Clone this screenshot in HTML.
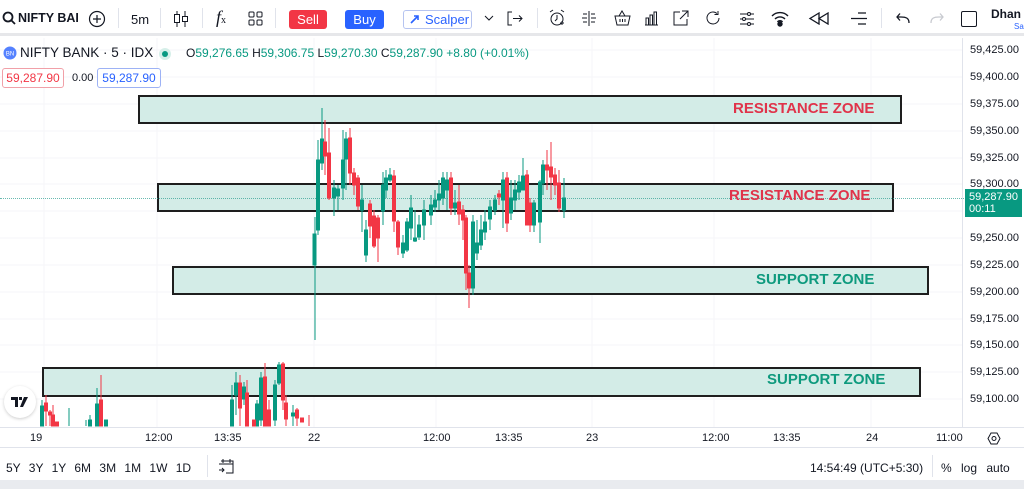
<!DOCTYPE html>
<html><head><meta charset="utf-8"><style>
*{margin:0;padding:0;box-sizing:border-box}
body{width:1024px;height:489px;overflow:hidden;background:#fff;font-family:"Liberation Sans",sans-serif;position:relative;color:#131722}
.a{position:absolute;white-space:nowrap}
.tb{font-size:13px}
.pl{position:absolute;left:970px;font-size:11px;color:#131722}
.tl{position:absolute;top:432px;font-size:11px;color:#131722}
.zone{position:absolute;background:#d3ece7;border:2px solid #1e1e1e}
.zt{position:absolute;font-size:15px;font-weight:bold;letter-spacing:0}
</style></head><body>
<div class="a" style="left:0;top:0;width:1024px;height:36px;background:#fff;border-bottom:3px solid #e6e7ea"></div>
<svg class="a" style="left:2px;top:11px" width="14" height="14"><circle cx="6" cy="6" r="4.5" fill="none" stroke="#131722" stroke-width="1.8"/><line x1="9.5" y1="9.5" x2="13" y2="13" stroke="#131722" stroke-width="1.8"/></svg>
<div class="a tb" style="left:18px;top:11px;font-weight:bold;font-size:12.5px">NIFTY BAI</div>
<svg class="a" style="left:88px;top:10px" width="18" height="18"><circle cx="9" cy="9" r="7.5" fill="none" stroke="#131722" stroke-width="1.2"/><path d="M9 5v8M5 9h8" stroke="#131722" stroke-width="1.2"/></svg>
<div class="a" style="left:118px;top:8px;width:1px;height:20px;background:#e0e3eb"></div>
<div class="a tb" style="left:131px;top:12px">5m</div>
<div class="a" style="left:160px;top:8px;width:1px;height:20px;background:#e0e3eb"></div>
<svg class="a" style="left:173px;top:10px" width="16" height="18"><path d="M4 1v16M12 1v16" stroke="#131722"/><rect x="1.5" y="4.5" width="5" height="8" fill="#fff" stroke="#131722"/><rect x="9.5" y="6.5" width="5" height="5" fill="#fff" stroke="#131722"/></svg>
<div class="a" style="left:202px;top:8px;width:1px;height:20px;background:#e0e3eb"></div>
<div class="a" style="left:216px;top:7px;font-family:'Liberation Serif',serif;font-style:italic;font-size:18px">f<span style="font-size:10px;font-style:normal">x</span></div>
<svg class="a" style="left:248px;top:11px" width="15" height="15" fill="none" stroke="#131722"><rect x="1" y="1" width="5" height="5" rx="1"/><rect x="9" y="1" width="5" height="5" rx="1"/><rect x="1" y="9" width="5" height="5" rx="1"/><rect x="9" y="9" width="5" height="5" rx="1"/></svg>
<div class="a" style="left:275px;top:8px;width:1px;height:20px;background:#e0e3eb"></div>
<div class="a" style="left:289px;top:10px;width:38px;height:19px;background:#f23645;border-radius:3px;color:#fff;font-size:13px;text-align:center;line-height:19px">Sell</div>
<div class="a" style="left:345px;top:10px;width:39px;height:19px;background:#2962ff;border-radius:3px;color:#fff;font-size:13px;text-align:center;line-height:19px">Buy</div>
<div class="a" style="left:403px;top:10px;width:69px;height:19px;border:1px solid #b6c4f0;border-radius:3px;color:#2962ff;font-size:13px;line-height:17px;padding-left:21px">Scalper</div>
<svg class="a" style="left:410px;top:14px" width="10" height="10"><path d="M1 9L8 2M4 2h4v4" stroke="#2962ff" stroke-width="1.6" fill="none"/></svg>
<svg class="a" style="left:484px;top:14px" width="10" height="8"><path d="M1 2l4 4 4-4" stroke="#131722" fill="none"/></svg>
<svg class="a" style="left:507px;top:11px" width="16" height="15" fill="none" stroke="#131722"><path d="M5 1H1v13h4M6 7.5h9M12 4.5l3 3-3 3"/></svg>
<div class="a" style="left:537px;top:8px;width:1px;height:20px;background:#e0e3eb"></div>
<svg class="a" style="left:548px;top:9px" width="18" height="18" fill="none" stroke="#131722"><circle cx="9" cy="10" r="6"/><path d="M2 3l3-2M16 3l-3-2M9 6v4l-2 2M12 14h4M14 12v4"/></svg>
<svg class="a" style="left:581px;top:11px" width="16" height="15" stroke="#131722"><path d="M8 0v15M2 3h4M10 3h4M1 7h5M10 7h5M2 11h4M10 11h4"/></svg>
<svg class="a" style="left:614px;top:10px" width="17" height="16" fill="none" stroke="#131722"><path d="M1 6h15l-2 9H3zM5 6l3-5 3 5M6 9v3M8.5 9v3M11 9v3"/></svg>
<svg class="a" style="left:644px;top:11px" width="15" height="15" fill="none" stroke="#131722"><path d="M1 14h13"/><rect x="2" y="7" width="2.5" height="7"/><rect x="6" y="4" width="2.5" height="10"/><rect x="10" y="1" width="2.5" height="13"/></svg>
<svg class="a" style="left:673px;top:10px" width="16" height="16" fill="none" stroke="#131722"><path d="M7 2H1v13h13V9M9 1h6v6M15 1L7 9"/></svg>
<svg class="a" style="left:705px;top:10px" width="16" height="16" fill="none" stroke="#131722"><path d="M14 8a6 6 0 1 1-2-4.5M13 1v3.5H9.5"/></svg>
<svg class="a" style="left:739px;top:11px" width="16" height="15" fill="none" stroke="#131722"><path d="M1 3h14M1 8h14M1 13h14"/><circle cx="10" cy="3" r="1.5" fill="#fff"/><circle cx="5" cy="8" r="1.5" fill="#fff"/><circle cx="10" cy="13" r="1.5" fill="#fff"/></svg>
<svg class="a" style="left:771px;top:10px" width="18" height="17" fill="none" stroke="#131722" stroke-width="1.4"><path d="M1 6a11 11 0 0 1 16 0M4 9a7 7 0 0 1 10 0M6.5 12a3 3 0 0 1 5 0"/><circle cx="9" cy="14" r="2" fill="#131722"/></svg>
<svg class="a" style="left:808px;top:12px" width="22" height="13" fill="none" stroke="#131722" stroke-width="1.3"><path d="M11 1L2 6.5 11 12zM20 1l-9 5.5 9 5.5z"/></svg>
<svg class="a" style="left:850px;top:11px" width="18" height="15" stroke="#131722" stroke-width="1.3"><path d="M8 2h8M1 7.5h16M8 13h8"/></svg>
<div class="a" style="left:881px;top:8px;width:1px;height:20px;background:#e0e3eb"></div>
<svg class="a" style="left:896px;top:12px" width="14" height="12" fill="none" stroke="#131722" stroke-width="1.3"><path d="M13 11c0-5-3-6-8-6H1M4 1.5L1 5l3 3.5"/></svg>
<svg class="a" style="left:930px;top:12px" width="14" height="12" fill="none" stroke="#c8cad0" stroke-width="1.3"><path d="M1 11c0-5 3-6 8-6h4M10 1.5L13 5l-3 3.5"/></svg>
<div class="a" style="left:961px;top:11px;width:16px;height:16px;border:1.4px solid #131722;border-radius:2px"></div>
<div class="a" style="left:991px;top:7px;font-size:12px;font-weight:bold">Dhan I</div>
<div class="a" style="left:1014px;top:22px;font-size:8px;color:#2962ff">Sa</div>

<svg class="a" style="left:0;top:38px" width="962" height="389">
<g stroke="#f5f6f8" stroke-width="1">
<line x1="0" y1="12" x2="962" y2="12"/><line x1="0" y1="39" x2="962" y2="39"/><line x1="0" y1="66" x2="962" y2="66"/><line x1="0" y1="93" x2="962" y2="93"/><line x1="0" y1="120" x2="962" y2="120"/><line x1="0" y1="146" x2="962" y2="146"/><line x1="0" y1="173" x2="962" y2="173"/><line x1="0" y1="200" x2="962" y2="200"/><line x1="0" y1="227" x2="962" y2="227"/><line x1="0" y1="254" x2="962" y2="254"/><line x1="0" y1="281" x2="962" y2="281"/><line x1="0" y1="307" x2="962" y2="307"/><line x1="0" y1="334" x2="962" y2="334"/><line x1="0" y1="361" x2="962" y2="361"/>
<line x1="44" y1="0" x2="44" y2="389"/><line x1="157" y1="0" x2="157" y2="389"/><line x1="314" y1="0" x2="314" y2="389"/><line x1="436" y1="0" x2="436" y2="389"/><line x1="592" y1="0" x2="592" y2="389"/><line x1="714" y1="0" x2="714" y2="389"/><line x1="871" y1="0" x2="871" y2="389"/>
</g>
</svg>
<div class="zone" style="left:138px;top:95px;width:764px;height:29px"></div>
<div class="zone" style="left:157px;top:183px;width:737px;height:29px"></div>
<div class="zone" style="left:172px;top:266px;width:757px;height:29px"></div>
<div class="zone" style="left:42px;top:367px;width:879px;height:30px"></div>
<div class="a" style="left:0;top:198px;width:964px;border-top:1px dotted #2a9d8f;opacity:.7"></div>
<svg class="a" style="left:0;top:0" width="962" height="427">
<g fill="#089981" stroke="#089981">
<line x1="315" y1="217" x2="315" y2="340"/><rect x="313" y="234" width="3" height="31"/>
<line x1="318" y1="140" x2="318" y2="235"/><rect x="316.5" y="160" width="3" height="70"/>
<line x1="322" y1="108" x2="322" y2="170"/><rect x="320.5" y="139" width="3" height="24"/>
<line x1="343" y1="130" x2="343" y2="200"/><rect x="341.5" y="160" width="3" height="28"/>
<line x1="346" y1="132" x2="346" y2="190"/><rect x="344.5" y="139" width="3" height="20"/>
<line x1="334" y1="180" x2="334" y2="216"/><rect x="332.5" y="188" width="3" height="10"/>
<line x1="338" y1="185" x2="338" y2="210"/><rect x="336.5" y="189" width="3" height="7"/>
<line x1="362" y1="185" x2="362" y2="232"/><rect x="360.5" y="200" width="3" height="10"/>
<line x1="366" y1="220" x2="366" y2="262"/><rect x="364.5" y="230" width="3" height="25"/>
<line x1="383" y1="172" x2="383" y2="225"/><rect x="381.5" y="185" width="3" height="26"/>
<line x1="386" y1="170" x2="386" y2="198"/><rect x="384.5" y="178" width="3" height="12"/>
<line x1="390" y1="168" x2="390" y2="182"/><rect x="388.5" y="175" width="3" height="5"/>
<line x1="403" y1="235" x2="403" y2="258"/><rect x="401.5" y="243" width="3" height="10"/>
<line x1="407" y1="218" x2="407" y2="252"/><rect x="405.5" y="222" width="3" height="28"/>
<line x1="411" y1="195" x2="411" y2="240"/><rect x="409.5" y="208" width="3" height="20"/>
<line x1="415" y1="210" x2="415" y2="242"/><rect x="413.5" y="238" width="3" height="3"/>
<line x1="419" y1="215" x2="419" y2="240"/><rect x="417.5" y="225" width="3" height="12"/>
<line x1="424" y1="200" x2="424" y2="240"/><rect x="422.5" y="210" width="3" height="15"/>
<line x1="431" y1="195" x2="431" y2="225"/><rect x="429.5" y="205" width="3" height="10"/>
<line x1="435" y1="190" x2="435" y2="212"/><rect x="433.5" y="200" width="3" height="7"/>
<line x1="439" y1="180" x2="439" y2="210"/><rect x="437.5" y="194" width="3" height="6"/>
<line x1="443" y1="172" x2="443" y2="205"/><rect x="441.5" y="178" width="3" height="20"/>
<line x1="447" y1="172" x2="447" y2="210"/><rect x="445.5" y="180" width="3" height="10"/>
<line x1="455" y1="190" x2="455" y2="215"/><rect x="453.5" y="203" width="3" height="5"/>
<line x1="473" y1="215" x2="473" y2="295"/><rect x="471.5" y="222" width="3" height="66"/>
<line x1="477" y1="220" x2="477" y2="260"/><rect x="475.5" y="243" width="3" height="10"/>
<line x1="481" y1="215" x2="481" y2="250"/><rect x="479.5" y="230" width="3" height="15"/>
<line x1="485" y1="210" x2="485" y2="240"/><rect x="483.5" y="222" width="3" height="10"/>
<line x1="490" y1="200" x2="490" y2="230"/><rect x="488.5" y="207" width="3" height="12"/>
<line x1="495" y1="195" x2="495" y2="215"/><rect x="493.5" y="200" width="3" height="10"/>
<line x1="503" y1="172" x2="503" y2="228"/><rect x="501.5" y="180" width="3" height="20"/>
<line x1="511" y1="180" x2="511" y2="220"/><rect x="509.5" y="198" width="3" height="15"/>
<line x1="515" y1="180" x2="515" y2="210"/><rect x="513.5" y="190" width="3" height="10"/>
<line x1="519" y1="175" x2="519" y2="200"/><rect x="517.5" y="182" width="3" height="10"/>
<line x1="523" y1="158" x2="523" y2="190"/><rect x="521.5" y="176" width="3" height="14"/>
<line x1="534" y1="200" x2="534" y2="232"/><rect x="532.5" y="203" width="3" height="22"/>
<line x1="540" y1="180" x2="540" y2="243"/><rect x="538.5" y="182" width="3" height="40"/>
<line x1="543" y1="160" x2="543" y2="195"/><rect x="541.5" y="165" width="3" height="18"/>
<line x1="564" y1="178" x2="564" y2="218"/><rect x="562.5" y="198" width="3" height="12"/>
<line x1="42" y1="400" x2="42" y2="426"/><rect x="40.5" y="406" width="3" height="20"/>
<line x1="69" y1="408" x2="69" y2="426"/>
<line x1="97" y1="388" x2="97" y2="426"/><rect x="95.5" y="404" width="3" height="22"/>
<line x1="90" y1="415" x2="90" y2="426"/><rect x="88.5" y="420" width="3" height="6"/>
<line x1="86" y1="420" x2="86" y2="426"/>
<rect x="104.5" y="420" width="3" height="6"/>
<line x1="232" y1="385" x2="232" y2="426"/><rect x="230.5" y="400" width="3" height="26"/>
<line x1="236" y1="372" x2="236" y2="415"/><rect x="234.5" y="383" width="3" height="12"/>
<line x1="244" y1="382" x2="244" y2="405"/><rect x="242.5" y="387" width="3" height="12"/>
<line x1="257" y1="400" x2="257" y2="426"/><rect x="255.5" y="404" width="3" height="22"/>
<line x1="261" y1="372" x2="261" y2="426"/><rect x="259.5" y="378" width="3" height="42"/>
<line x1="275" y1="380" x2="275" y2="426"/><rect x="273.5" y="385" width="3" height="35"/>
<line x1="279" y1="362" x2="279" y2="385"/><rect x="277.5" y="365" width="3" height="18"/>
<line x1="293" y1="405" x2="293" y2="426"/><rect x="291.5" y="413" width="3" height="3"/>
</g>
<g fill="#f23645" stroke="#f23645">
<line x1="325" y1="120" x2="325" y2="175"/><rect x="323.5" y="142" width="3" height="14"/>
<line x1="329" y1="128" x2="329" y2="200"/><rect x="327.5" y="153" width="3" height="45"/>
<line x1="350" y1="128" x2="350" y2="185"/><rect x="348.5" y="138" width="3" height="35"/>
<line x1="354" y1="168" x2="354" y2="195"/><rect x="352.5" y="173" width="3" height="12"/>
<line x1="358" y1="175" x2="358" y2="210"/><rect x="356.5" y="178" width="3" height="28"/>
<line x1="370" y1="200" x2="370" y2="238"/><rect x="368.5" y="204" width="3" height="22"/>
<line x1="374" y1="210" x2="374" y2="248"/><rect x="372.5" y="216" width="3" height="30"/>
<line x1="378" y1="215" x2="378" y2="262"/><rect x="376.5" y="218" width="3" height="20"/>
<line x1="394" y1="170" x2="394" y2="232"/><rect x="392.5" y="176" width="3" height="45"/>
<line x1="398" y1="220" x2="398" y2="255"/><rect x="396.5" y="222" width="3" height="25"/>
<line x1="451" y1="172" x2="451" y2="215"/><rect x="449.5" y="178" width="3" height="30"/>
<line x1="459" y1="185" x2="459" y2="225"/><rect x="457.5" y="202" width="3" height="12"/>
<line x1="463" y1="205" x2="463" y2="240"/><rect x="461.5" y="210" width="3" height="10"/>
<line x1="466" y1="215" x2="466" y2="290"/><rect x="464.5" y="218" width="3" height="55"/>
<line x1="469" y1="265" x2="469" y2="308"/><rect x="467.5" y="273" width="3" height="15"/>
<line x1="499" y1="190" x2="499" y2="205"/><rect x="497.5" y="194" width="3" height="3"/>
<line x1="507" y1="172" x2="507" y2="232"/><rect x="505.5" y="178" width="3" height="45"/>
<line x1="527" y1="170" x2="527" y2="225"/><rect x="525.5" y="175" width="3" height="50"/>
<line x1="530" y1="198" x2="530" y2="232"/><rect x="528.5" y="203" width="3" height="22"/>
<line x1="547" y1="150" x2="547" y2="190"/><rect x="545.5" y="165" width="3" height="5"/>
<line x1="551" y1="142" x2="551" y2="200"/><rect x="549.5" y="167" width="3" height="10"/>
<line x1="555" y1="168" x2="555" y2="195"/><rect x="553.5" y="175" width="3" height="10"/>
<line x1="559" y1="170" x2="559" y2="212"/><rect x="557.5" y="183" width="3" height="25"/>
<line x1="46" y1="395" x2="46" y2="426"/><rect x="44.5" y="403" width="3" height="8"/>
<line x1="50" y1="410" x2="50" y2="426"/><rect x="48.5" y="412" width="3" height="3"/>
<line x1="53" y1="405" x2="53" y2="426"/><rect x="51.5" y="415" width="3" height="11"/>
<rect x="55.5" y="422" width="3" height="4"/>
<line x1="101" y1="375" x2="101" y2="426"/><rect x="99.5" y="400" width="3" height="26"/>
<line x1="240" y1="375" x2="240" y2="426"/><rect x="238.5" y="383" width="3" height="25"/>
<line x1="247" y1="380" x2="247" y2="426"/><rect x="245.5" y="393" width="3" height="33"/>
<rect x="252.5" y="420" width="3" height="6"/>
<line x1="265" y1="363" x2="265" y2="426"/><rect x="263.5" y="377" width="3" height="49"/>
<line x1="269" y1="400" x2="269" y2="426"/><rect x="267.5" y="410" width="3" height="16"/>
<line x1="283" y1="362" x2="283" y2="410"/><rect x="281.5" y="364" width="3" height="36"/>
<line x1="286" y1="395" x2="286" y2="426"/><rect x="284.5" y="403" width="3" height="16"/>
<line x1="297" y1="408" x2="297" y2="426"/><rect x="295.5" y="410" width="3" height="8"/>
<rect x="300.5" y="418" width="3" height="4"/>
<line x1="309" y1="415" x2="309" y2="426"/>
</g>
</svg>
<div class="zt" style="left:733px;top:100px;color:#e0334a">RESISTANCE ZONE</div>
<div class="zt" style="left:729px;top:187px;color:#e0334a">RESISTANCE ZONE</div>
<div class="zt" style="left:756px;top:271px;color:#0e9a7e">SUPPORT ZONE</div>
<div class="zt" style="left:767px;top:371px;color:#0e9a7e">SUPPORT ZONE</div>

<svg class="a" style="left:3px;top:46px" width="14" height="14"><circle cx="7" cy="7" r="6.5" fill="#2962ff" opacity=".8"/><text x="7" y="9.5" font-size="6" fill="#fff" text-anchor="middle" font-family="Liberation Sans">BN</text></svg>
<div class="a" style="left:20px;top:45px;font-size:13.5px">NIFTY BANK · 5 · IDX</div>
<div class="a" style="left:159px;top:48px;width:12px;height:12px;border-radius:50%;background:#d6efe9"></div>
<div class="a" style="left:162px;top:51px;width:6px;height:6px;border-radius:50%;background:#089981"></div>
<div class="a" style="left:186px;top:46px;font-size:12px;color:#089981"><span style="color:#131722">O</span>59,276.65 <span style="color:#131722">H</span>59,306.75 <span style="color:#131722">L</span>59,270.30 <span style="color:#131722">C</span>59,287.90 +8.80 (+0.01%)</div>
<div class="a" style="left:2px;top:68px;width:62px;height:20px;border:1px solid #f1a0a8;border-radius:3px;color:#f23645;font-size:12px;line-height:18px;text-align:center;background:#fff">59,287.90</div>
<div class="a" style="left:72px;top:72px;font-size:11px">0.00</div>
<div class="a" style="left:97px;top:68px;width:64px;height:20px;border:1px solid #9db2f5;border-radius:3px;color:#2962ff;font-size:12px;line-height:18px;text-align:center;background:#fff">59,287.90</div>
<div class="a" style="left:4px;top:386px;width:32px;height:32px;border-radius:50%;background:#fff;box-shadow:0 1px 3px rgba(0,0,0,.2)"></div>
<svg class="a" style="left:10px;top:396px" width="20" height="12"><path d="M1 1h7v10H5V4H1zM9 1h3v3H9zM14 1h4l-5 10h-3z" fill="#131722"/></svg>

<div class="a" style="left:962px;top:38px;width:1px;height:389px;background:#e0e3eb"></div>
<div class="pl" style="top:44px">59,425.00</div>
<div class="pl" style="top:71px">59,400.00</div>
<div class="pl" style="top:98px">59,375.00</div>
<div class="pl" style="top:125px">59,350.00</div>
<div class="pl" style="top:152px">59,325.00</div>
<div class="pl" style="top:178px">59,300.00</div>
<div class="pl" style="top:232px">59,250.00</div>
<div class="pl" style="top:259px">59,225.00</div>
<div class="pl" style="top:286px">59,200.00</div>
<div class="pl" style="top:313px">59,175.00</div>
<div class="pl" style="top:339px">59,150.00</div>
<div class="pl" style="top:366px">59,125.00</div>
<div class="pl" style="top:393px">59,100.00</div>
<div class="a" style="left:965px;top:189px;width:57px;height:28px;background:#089981;color:#fff;font-size:11px;padding:2px 0 0 4px;line-height:12px">59,287.90<br>00:11</div>

<div class="a" style="left:0;top:427px;width:1024px;height:1px;background:#e0e3eb"></div>
<div class="tl" style="left:30px">19</div>
<div class="tl" style="left:145px">12:00</div>
<div class="tl" style="left:214px">13:35</div>
<div class="tl" style="left:308px">22</div>
<div class="tl" style="left:423px">12:00</div>
<div class="tl" style="left:495px">13:35</div>
<div class="tl" style="left:586px">23</div>
<div class="tl" style="left:702px">12:00</div>
<div class="tl" style="left:773px">13:35</div>
<div class="tl" style="left:866px">24</div>
<div class="tl" style="left:936px">11:00</div>
<svg class="a" style="left:987px;top:432px" width="14" height="13" fill="none" stroke="#131722"><path d="M4 1h6l3 5.5-3 5.5H4L1 6.5z"/><circle cx="7" cy="6.5" r="2"/></svg>
<div class="a" style="left:0;top:447px;width:1024px;height:1px;background:#e0e3eb"></div>
<div class="a" style="left:6px;top:461px;font-size:12px;word-spacing:5px">5Y 3Y 1Y 6M 3M 1M 1W 1D</div>
<div class="a" style="left:207px;top:455px;width:1px;height:22px;background:#e0e3eb"></div>
<svg class="a" style="left:218px;top:458px" width="17" height="17" fill="none" stroke="#131722"><path d="M3 3h12v12H8M1 6h14M5 1v4M12 1v4M1 12h5M4 10l2 2-2 2"/></svg>
<div class="a" style="left:810px;top:461px;font-size:12px">14:54:49 (UTC+5:30)</div>
<div class="a" style="left:932px;top:455px;width:1px;height:22px;background:#e0e3eb"></div>
<div class="a" style="left:941px;top:461px;font-size:12px;word-spacing:6px">% log auto</div>
<div class="a" style="left:0;top:480px;width:1024px;height:9px;background:#e9ebef"></div>
</body></html>
